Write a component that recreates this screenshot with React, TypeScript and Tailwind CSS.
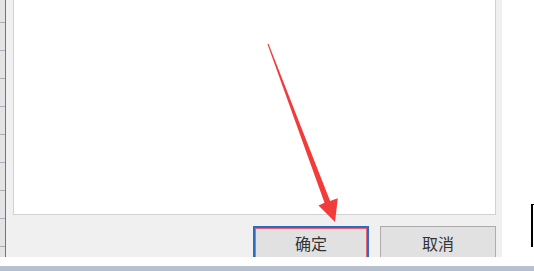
import React from "react";

const ticks = [0, 1, 2, 3, 4, 5, 6, 7, 8];

export default function App() {
  return (
    <div className="relative w-[534px] h-[271px] bg-white overflow-hidden flex flex-col" style={{ fontFamily: '"Noto Sans CJK SC", "Noto Sans", sans-serif' }}>
      <div className="flex h-[257px]">
        <div className="w-[5px] bg-[#e4e4e4] flex flex-col pt-[22px] gap-[27px]">
          {ticks.map((t) => (
            <div key={t} className="h-[1px] w-[5px] bg-[#a8b0bc]" />
          ))}
        </div>
        <div className="w-[1px] bg-[#3f7dcf]" />
        <div className="w-[496px] bg-[#f0f0f0] flex flex-col pl-[7px] pr-[6px]">
          <div className="h-[215px] bg-white border-l border-r border-b border-[#d2d2d2]" />
          <div className="flex justify-end gap-[11px] mt-[11px] h-[31px]">
            <div className="w-[116px] h-[31px] bg-[#e1e1e1] border-t-2 border-l-2 border-r-2 border-[#2a6cc4]">
              <div className="h-full flex items-center justify-center border-l border-r border-t border-[#e86474] text-[16px] text-[#333] pb-[1px]">
                确定
              </div>
            </div>
            <div className="w-[116px] h-[31px] bg-[#e1e1e1] border-t border-l border-r border-[#adadad] flex items-center justify-center text-[16px] text-[#333] pt-[1px]">
              取消
            </div>
          </div>
        </div>
        <div className="flex-1 flex justify-end pt-[204px]">
          <div className="w-[3px] h-[43px] border-l-2 border-t border-black" />
        </div>
      </div>
      <div className="h-[9px] bg-white" />
      <div className="h-[5px] bg-[#b7c0cf]" />
      <svg className="absolute left-0 top-0 pointer-events-none" width="534" height="271" viewBox="0 0 534 271">
        <polygon
          points="267.5,44.2 324.5,202.8 318.5,205.6 335,222 337.8,198.3 330.1,201 268.5,43.8"
          fill="#f23b3b"
        />
      </svg>
    </div>
  );
}
